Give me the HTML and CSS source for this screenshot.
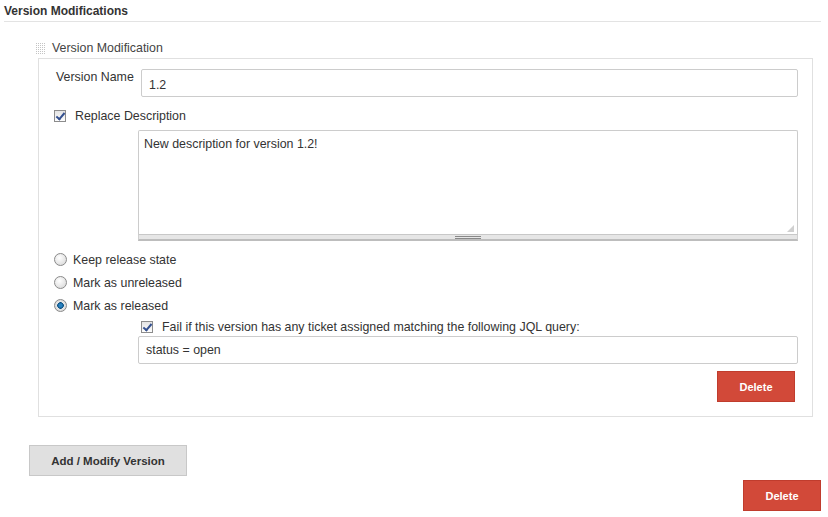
FILE: index.html
```html
<!DOCTYPE html>
<html lang="en">

<head>
  <meta charset="UTF-8">
  <title>Version Modifications</title>
  <link rel="stylesheet" href="styles.css">
</head>

<body>
  <div class="section">
    <div class="section-title">Version Modifications</div>

    <div class="repeat">
      <div class="repeat-head">
        <span class="handle"></span>
        <span>Version Modification</span>
      </div>

      <div class="panel">
        <div class="row name-row">
          <label class="name-label">Version Name</label>
          <input type="text" class="field" value="1.2">
        </div>

        <label class="check-row">
          <span class="box checked"></span>
          <span>Replace Description</span>
        </label>

        <div class="area-wrap">
          <div class="area">New description for version 1.2!<span class="grip"></span></div>
          <div class="area-bar"><span class="bar-lines"></span></div>
        </div>

        <div class="radios">
          <label class="radio-row"><span class="radio"></span>Keep release state</label>
          <label class="radio-row"><span class="radio"></span>Mark as unreleased</label>
          <label class="radio-row"><span class="radio on"></span>Mark as released</label>
        </div>

        <div class="sub">
          <label class="check-row small">
            <span class="box checked"></span>
            <span>Fail if this version has any ticket assigned matching the following JQL query:</span>
          </label>
          <input type="text" class="field" value="status = open">
          <div class="actions">
            <button class="btn-red">Delete</button>
          </div>
        </div>
      </div>
    </div>

    <button class="btn-grey">Add / Modify Version</button>
    <div class="actions outer">
      <button class="btn-red">Delete</button>
    </div>
  </div>
</body>

</html>
```

FILE: styles.css
```css
body {
  margin: 0;
  font-family: "Liberation Sans", Arial, sans-serif;
  font-size: 12.4px;
  color: #333;
  background: #fff;
}

.section {
  padding: 4px 7px 0 4px;
}

.section-title {
  font-weight: bold;
  font-size: 12px;
  color: #333;
  padding-bottom: 3px;
  border-bottom: 1px solid #e3e3e3;
}

.repeat {
  margin: 16px 8px 0 34px;
}

.repeat-head {
  display: flex;
  align-items: center;
  gap: 7px;
  color: #444;
  height: 20px;
  margin-left: -3px;
}

.handle {
  width: 10px;
  height: 12px;
  background-image:
    linear-gradient(90deg, #fff 1px, transparent 1px),
    linear-gradient(#fff 1px, transparent 1px);
  background-size: 2px 2px;
  background-color: #c4c4c4;
}

.panel {
  border: 1px solid #e0e0e0;
  padding: 10px 14px 14px 14px;
}

.name-row {
  display: flex;
  align-items: flex-start;
}

.name-label {
  width: 85px;
  padding-left: 3px;
  padding-top: 1px;
  color: #333;
}

.field {
  flex: 1;
  box-sizing: border-box;
  height: 28px;
  border: 1px solid #ccc;
  border-radius: 2px;
  padding: 0 7px;
  font-family: "Liberation Sans", Arial, sans-serif;
  font-size: 12.4px;
  color: #333;
  margin: 0;
}

.name-row .field {
  padding-top: 3px;
}

.check-row {
  display: flex;
  align-items: center;
  gap: 9px;
  margin: 11px 0 0 1px;
  height: 16px;
}

.box {
  width: 12px;
  height: 12px;
  box-sizing: border-box;
  border: 1px solid #8c8c8c;
  background: linear-gradient(#e4e4e4, #fdfdfd);
  position: relative;
}

.box.checked::after {
  content: "";
  position: absolute;
  left: 3px;
  top: 0;
  width: 3px;
  height: 7px;
  border: solid #34508f;
  border-width: 0 2px 2px 0;
  transform: rotate(40deg);
}

.area-wrap {
  margin: 6px 0 0 85px;
}

.area {
  position: relative;
  box-sizing: border-box;
  height: 104px;
  border: 1px solid #ccc;
  border-bottom: none;
  border-radius: 2px 2px 0 0;
  padding: 6px 5px;
  color: #333;
}

.grip {
  position: absolute;
  right: 3px;
  bottom: 2px;
  width: 7px;
  height: 7px;
  background: radial-gradient(circle, #999 0.6px, transparent 0.8px) 0 0 / 2px 2px;
  clip-path: polygon(100% 0, 100% 100%, 0 100%);
}

.area-bar {
  height: 4px;
  background: #e6e6e6;
  border: 1px solid #d0d0d0;
  border-top-color: #c8c8c8;
  border-bottom: 2px solid #bdbdbd;
  display: flex;
  justify-content: center;
  align-items: center;
}

.bar-lines {
  width: 26px;
  height: 1px;
  border-top: 1px solid #888;
  border-bottom: 1px solid #888;
}

.radios {
  margin-top: 7px;
}

.radio-row {
  display: flex;
  align-items: center;
  gap: 6px;
  height: 23px;
  margin-left: 1px;
}

.radio {
  width: 13px;
  height: 13px;
  box-sizing: border-box;
  border-radius: 50%;
  border: 1px solid #8a8a8a;
  background: radial-gradient(circle at 40% 35%, #fff, #d4d4d4);
}

.radio.on {
  background: radial-gradient(circle, #2a82c0 1.5px, #0c4f80 3px, #e6e6e6 3.6px, #cfcfcf);
}

.sub {
  margin: 2px 0 0 85px;
}

.check-row.small {
  margin: 0 0 1px 3px;
}

.sub .field {
  width: 100%;
}

.actions {
  display: flex;
  justify-content: flex-end;
  margin-top: 7px;
  padding-right: 3px;
}

.btn-red {
  width: 78px;
  height: 31px;
  background: #d24939;
  border: 1px solid #c03c2d;
  color: #fff;
  font-family: "Liberation Sans", Arial, sans-serif;
  font-weight: bold;
  font-size: 11px;
}

.btn-grey {
  margin: 28px 0 0 25px;
  width: 158px;
  height: 31px;
  background: #e0e0e0;
  border: 1px solid #c8c8c8;
  color: #333;
  font-family: "Liberation Sans", Arial, sans-serif;
  font-weight: bold;
  font-size: 11.5px;
}

.actions.outer {
  margin-top: 4px;
  padding-right: 0;
}
```
